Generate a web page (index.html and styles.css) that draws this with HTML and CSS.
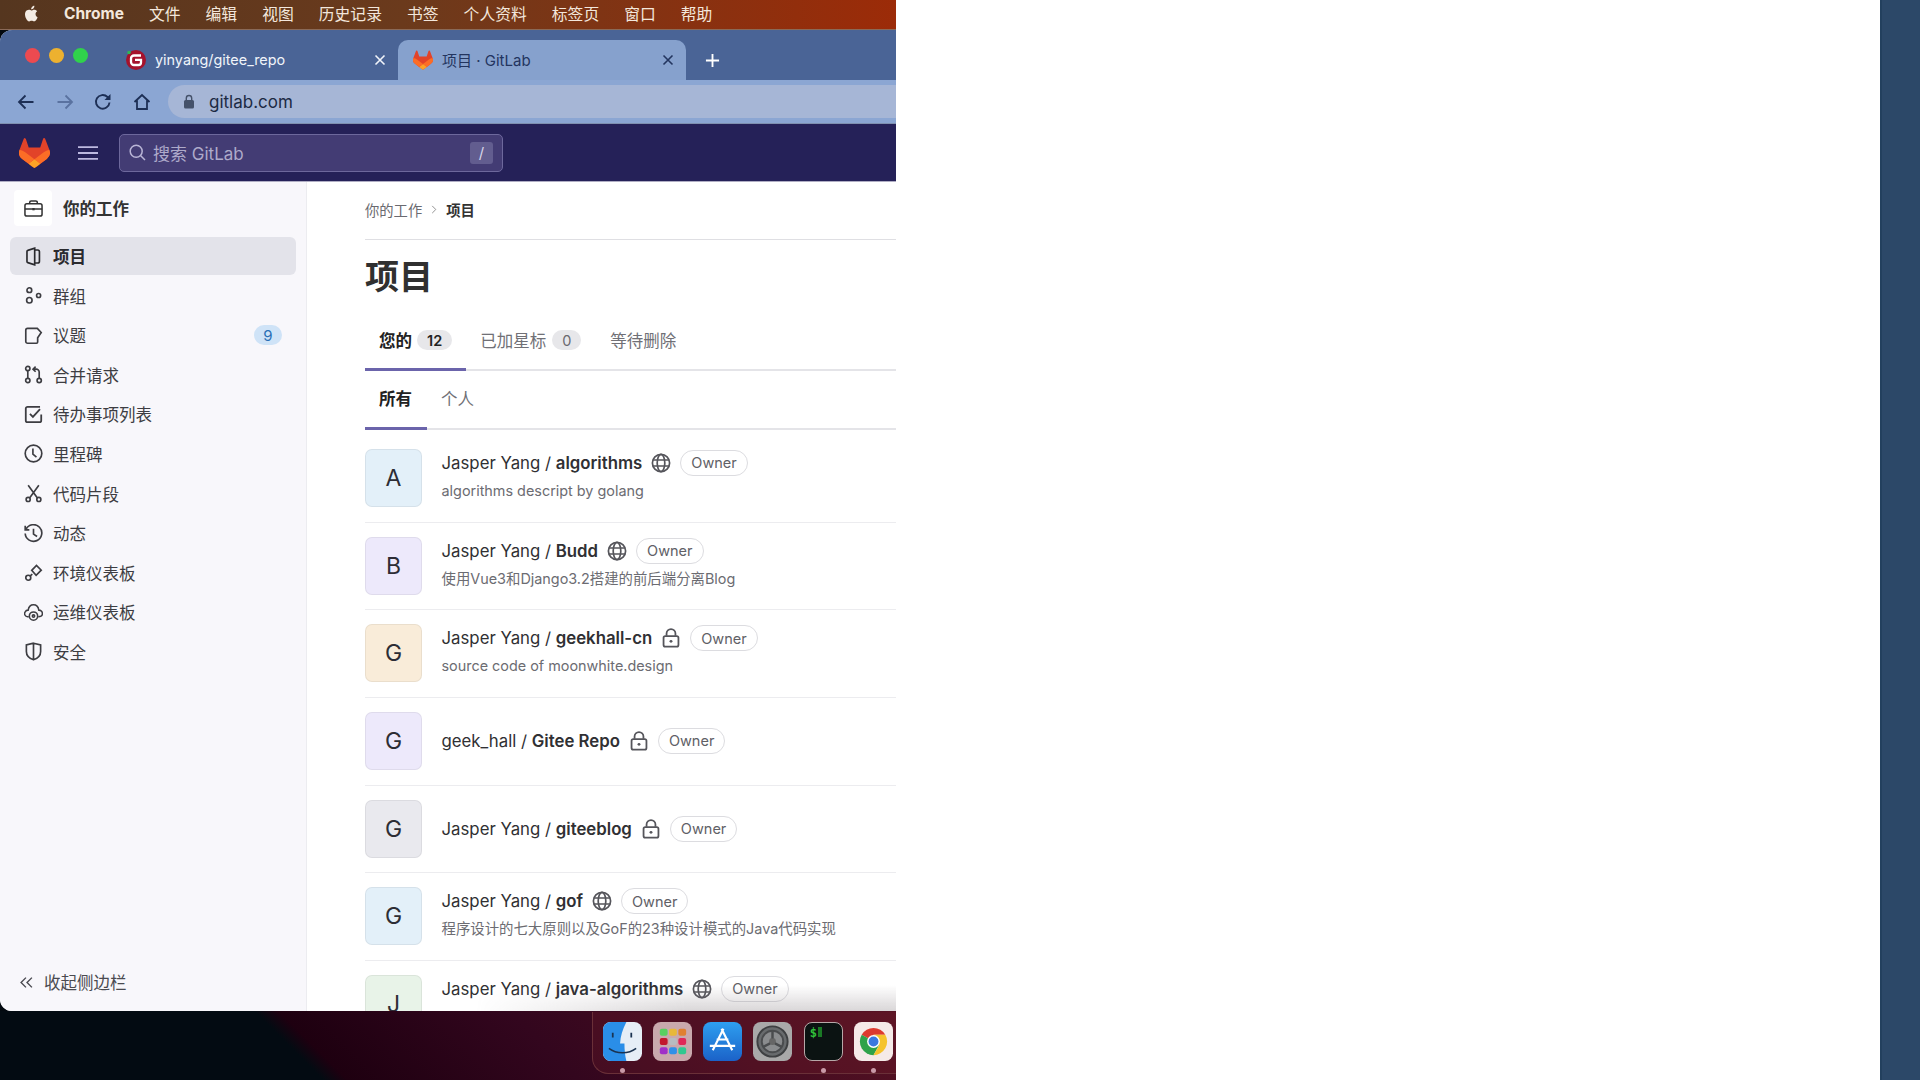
FILE: index.html
```html
<!DOCTYPE html>
<html lang="zh-CN">
<head>
<meta charset="utf-8">
<title>项目 · GitLab</title>
<link rel="stylesheet" href="styles.css">
</head>
<body>
<svg class="defs" width="0" height="0" aria-hidden="true">
  <symbol id="tanuki" viewBox="0 0 25 24">
    <path d="m24.507 9.5-.034-.09L21.082.562a.896.896 0 0 0-1.694.091l-2.29 7.01H7.825L5.535.653a.898.898 0 0 0-1.694-.09L.451 9.411.416 9.5a6.297 6.297 0 0 0 2.09 7.278l.012.01.03.022 5.16 3.867 2.56 1.935 1.554 1.176a1.051 1.051 0 0 0 1.268 0l1.555-1.176 2.56-1.935 5.197-3.89.014-.01A6.297 6.297 0 0 0 24.507 9.5Z" fill="#E24329"/>
    <path d="m24.507 9.5-.034-.09a11.44 11.44 0 0 0-4.56 2.051l-7.447 5.632 4.742 3.584 5.197-3.89.014-.01A6.297 6.297 0 0 0 24.507 9.5Z" fill="#FC6D26"/>
    <path d="m7.707 20.677 2.56 1.935 1.555 1.176a1.051 1.051 0 0 0 1.268 0l1.555-1.176 2.56-1.935-4.743-3.584-4.755 3.584Z" fill="#FCA326"/>
    <path d="M5.01 11.461a11.43 11.43 0 0 0-4.56-2.05L.416 9.5a6.297 6.297 0 0 0 2.09 7.278l.012.01.03.022 5.16 3.867 4.745-3.584-7.444-5.632Z" fill="#FC6D26"/>
  </symbol>
  <symbol id="globe" viewBox="0 0 20 20">
    <g fill="none" stroke="currentColor" stroke-width="1.7"><circle cx="10" cy="10" r="8.6"/><ellipse cx="10" cy="10" rx="3.8" ry="8.6"/><path d="M1.8 7h16.400M1.800 13h16.400"/></g>
  </symbol>
  <symbol id="lock" viewBox="0 0 16 18">
    <g fill="none" stroke="currentColor" stroke-width="1.6"><rect x="1.300" y="7.300" width="13.400" height="9.400" rx="1.500"/><path d="M4 7V5a4 4 0 0 1 8 0v2"/></g><circle cx="8" cy="12" r="1.300" fill="currentColor"/>
  </symbol>
</svg>

<div class="screen">
  <div class="left">
    <header class="menubar">
      <svg class="apple" viewBox="0 0 17 20"><path d="M12.200 10.600c0-2 1.700-3 1.800-3.100-1-1.400-2.500-1.600-3-1.600-1.300-.1-2.500.8-3.100.8-.7 0-1.700-.8-2.700-.7C3.800 6 2.500 6.800 1.800 8c-1.500 2.500-.4 6.300 1 8.300.7 1 1.500 2.100 2.600 2.100 1 0 1.400-.7 2.700-.7s1.600.7 2.700.6c1.100 0 1.800-1 2.500-2 .8-1.100 1.100-2.300 1.100-2.300s-2.200-.9-2.200-3.400zM10.100 4.400c.6-.7 1-1.700.9-2.700-.8 0-1.900.6-2.500 1.300-.5.600-1 1.600-.9 2.600.9.100 1.900-.5 2.500-1.200z" fill="#f4ece4"/></svg>
      <strong class="menu-app">Chrome</strong>
      <span>文件</span><span>编辑</span><span>视图</span><span>历史记录</span><span>书签</span><span>个人资料</span><span>标签页</span><span>窗口</span><span>帮助</span>
    </header>

    <div class="window">
      <div class="tabbar">
        <div class="lights"><i class="red"></i><i class="yellow"></i><i class="green"></i></div>
        <div class="tab">
          <svg class="favicon" viewBox="0 0 20 20"><circle cx="10" cy="10" r="10" fill="#a5122c"/><path d="M15 5.500H8a3 3 0 0 0-3 3v3.500a3 3 0 0 0 3 3h4.500a2.500 2.500 0 0 0 2.500-2.500V9.800H9" fill="none" stroke="#fff" stroke-width="2.300"/><circle cx="3" cy="2.500" r="1.800" fill="#2fb457"/></svg>
          <span class="tab-title">yinyang/gitee_repo</span>
          <svg class="tab-x" viewBox="0 0 12 12"><path d="M1.500 1.500l9 9M10.500 1.500l-9 9" stroke="currentColor" stroke-width="1.600"/></svg>
        </div>
        <div class="tab tab-active">
          <svg class="favicon"><use href="#tanuki"/></svg>
          <span class="tab-title">项目 · GitLab</span>
          <svg class="tab-x" viewBox="0 0 12 12"><path d="M1.500 1.500l9 9M10.500 1.500l-9 9" stroke="currentColor" stroke-width="1.600"/></svg>
        </div>
        <svg class="tab-plus" viewBox="0 0 16 16"><path d="M8 1v14M1 8h14" stroke="#fff" stroke-width="2"/></svg>
      </div>

      <div class="toolbar">
        <svg class="tool" viewBox="0 0 18 18"><path d="M16.500 9H2M8.500 2.500 2 9l6.500 6.500" fill="none" stroke="#1d2f55" stroke-width="1.800"/></svg>
        <svg class="tool tool-dim" viewBox="0 0 18 18"><path d="M1.500 9H16M9.500 2.500 16 9l-6.500 6.500" fill="none" stroke="#5a72a0" stroke-width="1.800"/></svg>
        <svg class="tool" viewBox="0 0 18 18"><path d="M15.500 9.500A6.800 6.800 0 1 1 13.500 4l2 2" fill="none" stroke="#1d2f55" stroke-width="1.900"/><path d="M16.500 1v6h-6z" fill="#1d2f55"/></svg>
        <svg class="tool" viewBox="0 0 18 18"><path d="M1.500 9 9 2l7.500 7M4 7.500V16h10V7.500" fill="none" stroke="#1d2f55" stroke-width="1.800"/></svg>
        <div class="urlbar">
          <svg class="url-lock" viewBox="0 0 12 15"><rect x="1" y="6" width="10" height="8.500" rx="1.500" fill="#45526a"/><path d="M3.300 6V4.200a2.700 2.700 0 0 1 5.400 0V6" fill="none" stroke="#45526a" stroke-width="1.400"/></svg>
          <span>gitlab.com</span>
        </div>
      </div>

      <nav class="glnav">
        <svg class="gl-logo"><use href="#tanuki"/></svg>
        <svg class="gl-burger" viewBox="0 0 20 14"><path d="M0 1.200h20M0 7h20M0 12.800h20" stroke="#bdb9e0" stroke-width="1.800"/></svg>
        <div class="searchbox">
          <svg class="search-ico" viewBox="0 0 17 17"><circle cx="7.200" cy="7.200" r="6" fill="none" stroke="#b9b5d6" stroke-width="1.500"/><path d="M11.500 11.500l4.500 4.500" stroke="#b9b5d6" stroke-width="1.500"/></svg>
          <span class="search-text">搜索 GitLab</span>
          <kbd class="search-key">/</kbd>
        </div>
      </nav>

      <div class="app">
        <aside class="sidebar">
          <div class="side-head">
            <span class="side-head-ico">
              <svg class="ico" viewBox="0 0 20 20"><g fill="none" stroke="currentColor" stroke-width="1.600"><rect x="1" y="5" width="18" height="13" rx="2"/><path d="M6 5V3.500A1.500 1.500 0 0 1 7.500 2h5A1.500 1.500 0 0 1 14 3.500V5M1 10.500h18"/></g><rect x="8.800" y="9.500" width="2.400" height="2.400" fill="currentColor"/></svg>
            </span>
            <span class="side-head-text">你的工作</span>
          </div>
          <ul class="side-list">
            <li class="side-item is-active"><svg class="ico" viewBox="0 0 16 16"><path d="M2.500 3.700c0-.4.300-.8.700-.9L9 1v14l-5.800-1.800c-.4-.1-.7-.5-.7-.9zM9 2.500h2.500A1.500 1.500 0 0 1 13 4v8a1.500 1.500 0 0 1-1.500 1.500H9" fill="none" stroke="currentColor" stroke-width="1.400"/></svg><span>项目</span></li>
            <li class="side-item"><svg class="ico" viewBox="0 0 16 16"><g fill="none" stroke="currentColor" stroke-width="1.400"><circle cx="4.500" cy="3.500" r="2"/><circle cx="4.500" cy="12" r="2.300"/><circle cx="12.300" cy="8" r="1.700"/></g></svg><span>群组</span></li>
            <li class="side-item"><svg class="ico" viewBox="0 0 16 16"><path d="M1.500 3.500A1.500 1.500 0 0 1 3 2h8.200l3.300 3.500-3 4.500v3.500a1 1 0 0 1-1 1H3a1.500 1.500 0 0 1-1.500-1.500z" fill="none" stroke="currentColor" stroke-width="1.400"/></svg><span>议题</span><b class="side-badge">9</b></li>
            <li class="side-item"><svg class="ico" viewBox="0 0 16 16"><g fill="none" stroke="currentColor" stroke-width="1.400"><circle cx="3.200" cy="3" r="1.800"/><circle cx="3.200" cy="13" r="1.800"/><circle cx="12.800" cy="13" r="1.800"/><path d="M3.200 4.800v6.400M12.800 11.200V6a2.500 2.500 0 0 0-2.500-2.500H8M9.800 1.300 7.600 3.500l2.200 2.200"/></g></svg><span>合并请求</span></li>
            <li class="side-item"><svg class="ico" viewBox="0 0 16 16"><path d="M14.500 8v5a1.500 1.500 0 0 1-1.500 1.500H3A1.500 1.500 0 0 1 1.500 13V3A1.500 1.500 0 0 1 3 1.500h10.500M5 7.500l2.500 2.500 6-6.500" fill="none" stroke="currentColor" stroke-width="1.500"/></svg><span>待办事项列表</span></li>
            <li class="side-item"><svg class="ico" viewBox="0 0 16 16"><circle cx="8" cy="8" r="7" fill="none" stroke="currentColor" stroke-width="1.400"/><path d="M7.500 3.800V8.500l3 2.500" fill="none" stroke="currentColor" stroke-width="1.400"/></svg><span>里程碑</span></li>
            <li class="side-item"><svg class="ico" viewBox="0 0 16 16"><g fill="none" stroke="currentColor" stroke-width="1.400"><circle cx="3.500" cy="13" r="1.700"/><circle cx="12.500" cy="13" r="1.700"/><path d="M3.500 1l7.800 10.700M12.500 1 4.700 11.700"/></g></svg><span>代码片段</span></li>
            <li class="side-item"><svg class="ico" viewBox="0 0 16 16"><path d="M1.700 4.500A7 7 0 1 1 1 8M1 1.500v3.500h3.500M8 4v4.500l3 2" fill="none" stroke="currentColor" stroke-width="1.400"/></svg><span>动态</span></li>
            <li class="side-item"><svg class="ico" viewBox="0 0 16 16"><g fill="none" stroke="currentColor" stroke-width="1.400"><circle cx="3.600" cy="12.400" r="2.100"/><path d="M5.300 10.800 7 9.300M6.500 6.200 10.500 2l4 4-4.300 4.300z"/></g></svg><span>环境仪表板</span></li>
            <li class="side-item"><svg class="ico" viewBox="0 0 16 16"><g fill="none" stroke="currentColor" stroke-width="1.300"><path d="M4 11.500H3A2.500 2.500 0 0 1 1 7.500C1.500 6.500 3 6 3.500 6 4 3 6 1.500 8 1.500s4 1.500 4.500 4.500c1.500 0 3 1.200 3 3s-1.300 2.500-3.500 2.500"/><circle cx="8" cy="11" r="3.500"/><circle cx="8" cy="11" r="1"/></g></svg><span>运维仪表板</span></li>
            <li class="side-item"><svg class="ico" viewBox="0 0 16 16"><path d="M8 1 14 2.500V8c0 3.500-3 6-6 7-3-1-6-3.500-6-7V2.500zM8 1v14" fill="none" stroke="currentColor" stroke-width="1.400"/></svg><span>安全</span></li>
          </ul>
          <div class="side-foot">
            <svg class="foot-ico" viewBox="0 0 12 12"><path d="M5.500 1.500 1 6l4.500 4.500M11 1.500 6.500 6l4.500 4.500" fill="none" stroke="currentColor" stroke-width="1.300"/></svg>
            <span>收起侧边栏</span>
          </div>
        </aside>

        <main class="main">
          <div class="crumbs"><span>你的工作</span><svg class="crumb-sep" viewBox="0 0 6 10"><path d="M1 1l4 4-4 4" fill="none" stroke="#888" stroke-width="1"/></svg><strong>项目</strong></div>
          <h1 class="title">项目</h1>
          <div class="tabs">
            <div class="tb tb-active"><span>您的</span><b class="count">12</b></div>
            <div class="tb"><span>已加星标</span><b class="count count-muted">0</b></div>
            <div class="tb"><span>等待删除</span></div>
          </div>
          <div class="tabs subtabs">
            <div class="tb tb-active"><span>所有</span></div>
            <div class="tb"><span>个人</span></div>
          </div>
          <div class="rows">
            <div class="row">
              <div class="avatar av-blue">A</div>
              <div class="info">
                <div class="name"><span>Jasper Yang / <b>algorithms</b></span><svg class="vis"><use href="#globe"/></svg><em class="role">Owner</em></div>
                <p class="desc">algorithms descript by golang</p>
              </div>
            </div>
            <div class="row">
              <div class="avatar av-purple">B</div>
              <div class="info">
                <div class="name"><span>Jasper Yang / <b>Budd</b></span><svg class="vis"><use href="#globe"/></svg><em class="role">Owner</em></div>
                <p class="desc">使用Vue3和Django3.2搭建的前后端分离Blog</p>
              </div>
            </div>
            <div class="row">
              <div class="avatar av-orange">G</div>
              <div class="info">
                <div class="name"><span>Jasper Yang / <b>geekhall-cn</b></span><svg class="vis"><use href="#lock"/></svg><em class="role">Owner</em></div>
                <p class="desc">source code of moonwhite.design</p>
              </div>
            </div>
            <div class="row">
              <div class="avatar av-purple">G</div>
              <div class="info">
                <div class="name"><span>geek_hall / <b>Gitee Repo</b></span><svg class="vis"><use href="#lock"/></svg><em class="role">Owner</em></div>
              </div>
            </div>
            <div class="row">
              <div class="avatar av-grey">G</div>
              <div class="info">
                <div class="name"><span>Jasper Yang / <b>giteeblog</b></span><svg class="vis"><use href="#lock"/></svg><em class="role">Owner</em></div>
              </div>
            </div>
            <div class="row">
              <div class="avatar av-blue">G</div>
              <div class="info">
                <div class="name"><span>Jasper Yang / <b>gof</b></span><svg class="vis"><use href="#globe"/></svg><em class="role">Owner</em></div>
                <p class="desc">程序设计的七大原则以及GoF的23种设计模式的Java代码实现</p>
              </div>
            </div>
            <div class="row">
              <div class="avatar av-green">J</div>
              <div class="info">
                <div class="name"><span>Jasper Yang / <b>java-algorithms</b></span><svg class="vis"><use href="#globe"/></svg><em class="role">Owner</em></div>
                <p class="desc">&nbsp;</p>
              </div>
            </div>
          </div>
          <div class="dock-shade"></div>
        </main>
      </div>
    </div>

    <footer class="desktop">
      <div class="dock">
        <div class="dock-app">
          <svg class="dock-ico" viewBox="0 0 40 40"><rect width="40" height="40" rx="8" fill="#e6eef6"/><path d="M8 0h16c-4 8-6 14-6.500 22H22c0 6 .5 12 2 18H8a8 8 0 0 1-8-8V8a8 8 0 0 1 8-8z" fill="#2a8ee8"/><path d="M10 11v5M29 11v5" stroke="#1b3350" stroke-width="1.800"/><path d="M6 27c8 6 20 6 28 0" fill="none" stroke="#1b3350" stroke-width="1.500"/></svg>
          <i class="dot"></i>
        </div>
        <div class="dock-app">
          <svg class="dock-ico" viewBox="0 0 40 40"><rect width="40" height="40" rx="8" fill="#c9a9ad"/><g><rect x="7" y="7" width="8" height="7" rx="2" fill="#58d060"/><rect x="16.500" y="7" width="8" height="7" rx="2" fill="#e8b83a"/><rect x="26" y="7" width="8" height="7" rx="2" fill="#e08030"/><rect x="7" y="16.500" width="8" height="7" rx="2" fill="#c2182c"/><rect x="16.500" y="16.500" width="8" height="7" rx="2" fill="#b8bcc0"/><rect x="26" y="16.500" width="8" height="7" rx="2" fill="#e02858"/><rect x="7" y="26" width="8" height="7" rx="2" fill="#a030c8"/><rect x="16.500" y="26" width="8" height="7" rx="2" fill="#3090e8"/><rect x="26" y="26" width="8" height="7" rx="2" fill="#30c890"/></g></svg>
        </div>
        <div class="dock-app">
          <svg class="dock-ico" viewBox="0 0 40 40"><defs><linearGradient id="as" x1="0" y1="0" x2="0" y2="1"><stop offset="0" stop-color="#2e9ff0"/><stop offset="1" stop-color="#1b62c8"/></linearGradient></defs><rect width="40" height="40" rx="8" fill="url(#as)"/><path d="M21 7 10 29M19 7l11 22M7 24.500h26M14 18h12" stroke="#fff" stroke-width="2.200" fill="none"/></svg>
        </div>
        <div class="dock-app">
          <svg class="dock-ico" viewBox="0 0 40 40"><rect width="40" height="40" rx="8" fill="#a9a9a9"/><circle cx="20" cy="20" r="15.500" fill="#686b6d" stroke="#3e4042" stroke-width="2"/><circle cx="20" cy="20" r="11" fill="#8a8c8e" stroke="#4a4c4e" stroke-width="2"/><circle cx="20" cy="20" r="3.500" fill="#666"/><path d="M20 9v8M10.500 25.500l7-3.500M29.500 25.500l-7-3.500" stroke="#4a4c4e" stroke-width="2.500"/></svg>
        </div>
        <div class="dock-app">
          <div class="term"><span>$</span><i></i></div>
          <i class="dot"></i>
        </div>
        <div class="dock-app">
          <svg class="dock-ico" viewBox="0 0 40 40"><rect width="40" height="40" rx="8" fill="#f5eae8"/><path d="M20 20 7.900 13A14 14 0 0 1 32.100 13H20z" fill="#dd3a2f"/><path d="M7.900 13A14 14 0 0 0 20 34L26 23z" fill="#2fa24a"/><path d="M32.100 13H20l6 10.500L20 34A14 14 0 0 0 32.100 13z" fill="#f5c32c"/><circle cx="20" cy="20" r="6.600" fill="#fff"/><circle cx="20" cy="20" r="5.100" fill="#3b78e0"/></svg>
          <i class="dot"></i>
        </div>
      </div>
    </footer>
  </div>
  <div class="blank"></div>
  <div class="strip"></div>
</div>
</body>
</html>
```

FILE: styles.css
```css
* { box-sizing: border-box; }
html, body { margin: 0; padding: 0; }
body { font-family: Inter, "Noto Sans CJK SC", "Noto Sans", sans-serif; background: #fff; }
.defs { position: absolute; }
ul { list-style: none; margin: 0; padding: 0; }
p, h1 { margin: 0; }

.screen { display: flex; width: 1920px; height: 1080px; overflow: hidden; }
.left { width: 896px; display: flex; flex-direction: column; background: #03090f; }
.blank { flex: 1; background: #fff; }
.strip { width: 40px; background: #2c4868; border-left: 2px solid #23405e; }

/* menu bar */
.menubar {
  height: 30px; flex: none; display: flex; align-items: center; gap: 25px; padding: 0 0 3px 24px;
  background: linear-gradient(90deg, #55361f 0%, #6b3a1c 45%, #9c2b08 100%);
  color: #f3e7dc; font-size: 15.800px; border-bottom: 1px solid #8a6a58;
}
.apple { width: 16px; height: 19px; margin-right: -1px; }
.menu-app { font-weight: 700; font-size: 15.500px; }

/* window */
.window { height: 981px; flex: none; display: flex; flex-direction: column; border-radius: 12px 0 0 12px; overflow: hidden; background: #fff; }
.tabbar { height: 50px; flex: none; display: flex; align-items: flex-end; background: #4a6496; }
.lights { display: flex; gap: 9px; width: 117px; padding: 0 0 17px 25px; align-self: flex-end; }
.lights i { width: 15px; height: 15px; border-radius: 50%; }
.red { background: #ec4a50; }
.yellow { background: #edb12f; }
.green { background: #30d24c; }
.tab { width: 281px; height: 40px; display: flex; align-items: center; padding: 0 12px 1px 9px; color: #f0f4fa; font-size: 14.400px; }
.favicon { width: 20px; height: 20px; flex: none; }
.tab-title { margin-left: 9px; flex: 1; }
.tab-x { width: 12px; height: 12px; flex: none; }
.tab-active { width: 288px; background: #86a1cd; border-radius: 10px 10px 0 0; color: #23355f; font-size: 15px; padding: 0 12px 1px 15px; }
.tab-active .tab-title { margin-left: 9px; }
.tab-plus { width: 15px; height: 15px; margin: 0 0 12px 19px; }

.toolbar { height: 44px; flex: none; display: flex; align-items: flex-start; padding: 5px 0 0 17px; gap: 20.500px; background: #8ba6d3; border-bottom: 1px solid #7f90b0; }
.tool { width: 18px; height: 18px; margin-top: 8px; flex: none; }
.urlbar { flex: 1; height: 33px; margin-left: -3px; border-radius: 17px 0 0 17px; background: #a6b6d6; display: flex; align-items: center; padding-left: 15px; gap: 14px; color: #1c2a44; font-size: 17px; }
.url-lock { width: 12px; height: 15px; }

.glnav { height: 58px; flex: none; display: flex; align-items: center; background: #252158; padding-left: 19px; border-bottom: 1px solid #b0aec4; }
.gl-logo { width: 31px; height: 30px; }
.gl-burger { width: 20px; height: 14px; margin-left: 28px; }
.searchbox { width: 384px; height: 38px; margin-left: 21px; display: flex; align-items: center; padding: 0 9px 0 9px; background: #433c74; border: 1px solid #6d689c; border-radius: 5px; }
.search-ico { width: 17px; height: 17px; }
.search-text { margin-left: 7px; flex: 1; color: #aeaaca; font-size: 17px; }
.search-key { width: 23px; height: 22px; display: flex; align-items: center; justify-content: center; border-radius: 3px; background: #625d8f; color: #d8d6ea; font: 15px Inter, sans-serif; }

/* app */
.app { flex: 1; display: flex; min-height: 0; }
.sidebar { width: 307px; flex: none; display: flex; flex-direction: column; background: #f8f7fb; border-right: 1px solid #ececf0; color: #3d3d42; font-size: 16.500px; padding: 7px 10px 0; }
.ico { width: 19px; height: 19px; flex: none; }
.side-head { height: 38px; display: flex; align-items: center; color: #333; }
.side-head-ico { width: 38px; height: 36px; margin-left: 4px; background: #fff; display: flex; align-items: center; justify-content: center; border-radius: 4px; }
.side-head-text { margin-left: 11px; font-weight: 600; }
.side-list { margin-top: 10px; display: flex; flex-direction: column; gap: 1.600px; }
.side-item { height: 38px; display: flex; align-items: center; padding: 0 14px 0 14px; gap: 10px; border-radius: 6px; }
.side-item span { flex: 1; }
.is-active { background: #e3e3ea; color: #2a2a2e; font-weight: 600; }
.side-badge { width: 28px; height: 20px; border-radius: 10px; background: #cfe3f7; color: #2a6fb5; font-size: 15px; font-weight: 400; display: flex; align-items: center; justify-content: center; }
.side-foot { margin-top: auto; height: 41px; display: flex; align-items: flex-start; gap: 11px; padding: 0 0 0 10px; color: #4a4a50; }
.foot-ico { width: 13px; height: 13px; margin-top: 6px; }

/* main */
.main { flex: 1; min-width: 0; padding-left: 58px; overflow: hidden; position: relative; background: #fff; color: #303030; }
.crumbs { height: 58px; padding-bottom: 3px; display: flex; align-items: center; gap: 9px; font-size: 14.300px; color: #6a6a70; border-bottom: 1px solid #dfdfe3; }
.crumbs strong { color: #333; font-weight: 600; }
.crumb-sep { width: 6px; height: 9px; }
.title { font-size: 34px; font-weight: 700; line-height: 40px; margin-top: 17px; color: #303030; }
.tabs { display: flex; margin-top: 18px; height: 56px; border-bottom: 2px solid #e4e4e8; }
.tb { display: flex; align-items: center; gap: 5px; padding: 0 14px 3px; height: 56px; color: #707076; font-size: 16.500px; border-bottom: 3px solid transparent; }
.tb + .tb { gap: 6px; }
.tb-active { color: #222; font-weight: 600; border-bottom-color: #6b64ab; }
.tb:nth-child(2) { padding-right: 15px; }
.count { min-width: 34px; height: 20px; padding: 0 10px; border-radius: 10px; background: #e7e7ea; font-size: 14.500px; font-weight: 600; display: flex; align-items: center; justify-content: center; }
.count-muted { min-width: 28px; color: #6a6a70; font-weight: 400; }
.subtabs { margin-top: 0; height: 59px; }
.subtabs .tb { height: 59px; padding-bottom: 2px; }
.subtabs .tb-active { width: 62px; }

.rows { margin-top: 5px; }
.row { height: 87.700px; display: flex; align-items: center; gap: 19.500px; border-bottom: 1px solid #ececef; padding-bottom: 1px; }
.avatar { width: 57px; height: 58px; flex: none; display: flex; align-items: center; justify-content: center; border-radius: 7px; border: 1px solid rgba(0, 0, 0, .06); font-size: 23px; color: #2d2d35; }
.av-blue { background: #e3f0f9; }
.av-purple { background: #ede9fb; }
.av-orange { background: #f9ecd9; }
.av-grey { background: #e9e9ee; }
.av-green { background: #e8f3e8; }
.info { display: flex; flex-direction: column; gap: 5px; min-width: 0; }
.name { display: flex; align-items: center; font-size: 16.800px; color: #303033; height: 26px; }
.name b { font-weight: 600; }
.vis { width: 20px; height: 20px; margin-left: 9px; color: #55555b; flex: none; }
.role { font-style: normal; margin-left: 9px; height: 26px; padding: 0 10px; display: flex; align-items: center; border: 1px solid #dcdce0; border-radius: 13px; font-size: 14.500px; color: #606066; }
.desc { font-size: 14.400px; line-height: 20px; margin-bottom: 5px; color: #6c6c72; white-space: nowrap; }
.dock-shade { position: absolute; right: 0; bottom: 0; width: 420px; height: 26px; background: linear-gradient(180deg, rgba(120, 110, 115, 0), rgba(120, 110, 115, .28)); -webkit-mask-image: linear-gradient(90deg, transparent, #000 50%); mask-image: linear-gradient(90deg, transparent, #000 50%); }

/* desktop & dock */
.desktop { flex: 1; display: flex; justify-content: flex-end; align-items: flex-start; background: linear-gradient(45deg, #030b12 0%, #030b12 33.500%, #1e0010 36%, #33061e 60%, #561223 100%); }
.dock { width: 304px; height: 62px; margin-top: 1px; display: flex; gap: 11.300px; padding: 10px 0 0 9.500px; border: 1px solid #6a3038; border-right: 0; border-top: 0; border-radius: 0 0 0 16px; background: rgba(120, 30, 45, .25); }
.dock-app { position: relative; width: 39px; height: 39px; flex: none; }
.dock-ico { width: 39px; height: 39px; display: block; }
.dot { position: absolute; left: 17.500px; top: 46px; width: 5px; height: 5px; border-radius: 50%; background: #c99aa8; }
.term { width: 39px; height: 39px; border-radius: 8px; border: 1.500px solid #b7a8a8; background: #0b1312; color: #31c13a; font: 700 12px "DejaVu Sans Mono", monospace; padding: 3px 0 0 5px; display: flex; align-items: flex-start; }
.term i { width: 4px; height: 10px; margin: 1px 0 0 1px; background: #1a7a25; }
```
